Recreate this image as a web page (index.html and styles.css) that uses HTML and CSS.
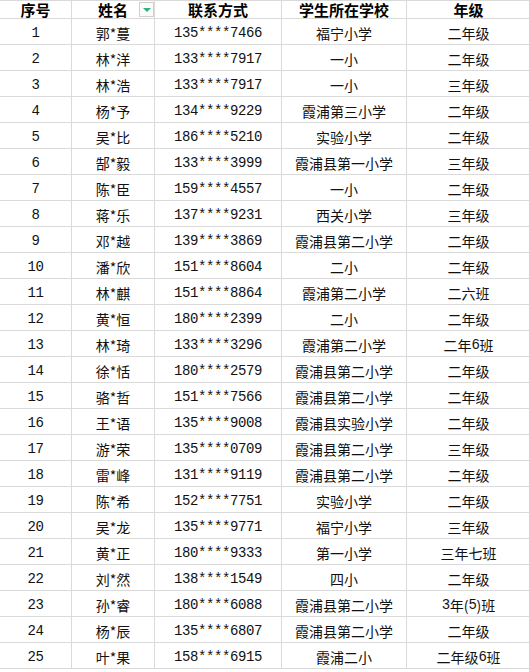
FILE: index.html
```html
<!DOCTYPE html>
<html lang="zh">
<head>
<meta charset="utf-8">
<link rel="stylesheet" href="styles.css">
</head>
<body>
<div class="sheet">
  <div class="cell head">序号</div>
  <div class="cell head name-head">姓名<span class="filter"><span class="tri"></span></span></div>
  <div class="cell head">联系方式</div>
  <div class="cell head">学生所在学校</div>
  <div class="cell head last">年级</div>

  <div class="cell num">1</div><div class="cell">郭*蔓</div><div class="cell num">135****7466</div><div class="cell">福宁小学</div><div class="cell last">二年级</div>
  <div class="cell num">2</div><div class="cell">林*洋</div><div class="cell num">133****7917</div><div class="cell">一小</div><div class="cell last">二年级</div>
  <div class="cell num">3</div><div class="cell">林*浩</div><div class="cell num">133****7917</div><div class="cell">一小</div><div class="cell last">三年级</div>
  <div class="cell num">4</div><div class="cell">杨*予</div><div class="cell num">134****9229</div><div class="cell">霞浦第三小学</div><div class="cell last">二年级</div>
  <div class="cell num">5</div><div class="cell">吴*比</div><div class="cell num">186****5210</div><div class="cell">实验小学</div><div class="cell last">二年级</div>
  <div class="cell num">6</div><div class="cell">郜*毅</div><div class="cell num">133****3999</div><div class="cell">霞浦县第一小学</div><div class="cell last">三年级</div>
  <div class="cell num">7</div><div class="cell">陈*臣</div><div class="cell num">159****4557</div><div class="cell">一小</div><div class="cell last">二年级</div>
  <div class="cell num">8</div><div class="cell">蒋*乐</div><div class="cell num">137****9231</div><div class="cell">西关小学</div><div class="cell last">三年级</div>
  <div class="cell num">9</div><div class="cell">邓*越</div><div class="cell num">139****3869</div><div class="cell">霞浦县第二小学</div><div class="cell last">二年级</div>
  <div class="cell num">10</div><div class="cell">潘*欣</div><div class="cell num">151****8604</div><div class="cell">二小</div><div class="cell last">二年级</div>
  <div class="cell num">11</div><div class="cell">林*麒</div><div class="cell num">151****8864</div><div class="cell">霞浦第二小学</div><div class="cell last">二六班</div>
  <div class="cell num">12</div><div class="cell">黄*恒</div><div class="cell num">180****2399</div><div class="cell">二小</div><div class="cell last">二年级</div>
  <div class="cell num">13</div><div class="cell">林*琦</div><div class="cell num">133****3296</div><div class="cell">霞浦第二小学</div><div class="cell last">二年<span class="d">6</span>班</div>
  <div class="cell num">14</div><div class="cell">徐*恬</div><div class="cell num">180****2579</div><div class="cell">霞浦县第二小学</div><div class="cell last">二年级</div>
  <div class="cell num">15</div><div class="cell">骆*哲</div><div class="cell num">151****7566</div><div class="cell">霞浦县第二小学</div><div class="cell last">二年级</div>
  <div class="cell num">16</div><div class="cell">王*语</div><div class="cell num">135****9008</div><div class="cell">霞浦县实验小学</div><div class="cell last">二年级</div>
  <div class="cell num">17</div><div class="cell">游*荣</div><div class="cell num">135****0709</div><div class="cell">霞浦县第二小学</div><div class="cell last">三年级</div>
  <div class="cell num">18</div><div class="cell">雷*峰</div><div class="cell num">131****9119</div><div class="cell">霞浦县第二小学</div><div class="cell last">二年级</div>
  <div class="cell num">19</div><div class="cell">陈*希</div><div class="cell num">152****7751</div><div class="cell">实验小学</div><div class="cell last">二年级</div>
  <div class="cell num">20</div><div class="cell">吴*龙</div><div class="cell num">135****9771</div><div class="cell">福宁小学</div><div class="cell last">三年级</div>
  <div class="cell num">21</div><div class="cell">黄*正</div><div class="cell num">180****9333</div><div class="cell">第一小学</div><div class="cell last">三年七班</div>
  <div class="cell num">22</div><div class="cell">刘*然</div><div class="cell num">138****1549</div><div class="cell">四小</div><div class="cell last">二年级</div>
  <div class="cell num">23</div><div class="cell">孙*睿</div><div class="cell num">180****6088</div><div class="cell">霞浦县第二小学</div><div class="cell last"><span class="d">3</span>年(<span class="d">5</span>)班</div>
  <div class="cell num">24</div><div class="cell">杨*辰</div><div class="cell num">135****6807</div><div class="cell">霞浦县第二小学</div><div class="cell last">二年级</div>
  <div class="cell num">25</div><div class="cell">叶*果</div><div class="cell num">158****6915</div><div class="cell">霞浦二小</div><div class="cell last">二年级<span class="d">6</span>班</div>
</div>
</body>
</html>
```

FILE: styles.css
```css
html, body {
  margin: 0;
  padding: 0;
  background: #ffffff;
}
body {
  width: 529px;
  height: 672px;
  overflow: hidden;
}
.sheet {
  display: grid;
  grid-template-columns: 72px 83px 127px 125px 123px;
  grid-template-rows: 18px repeat(25, 26px);
  border-top: 1px solid #dadada;
  font-family: "Noto Sans CJK SC", sans-serif;
  font-size: 14px;
  color: #111;
}
.cell {
  box-sizing: border-box;
  border-right: 1px solid #dadada;
  border-bottom: 1px solid #dadada;
  display: flex;
  align-items: center;
  justify-content: center;
  white-space: nowrap;
  line-height: 16px;
  padding-top: 2px;
}
.cell.last {
  border-right: none;
}
.head {
  font-weight: bold;
  font-size: 15px;
  line-height: 17px;
  color: #000;
  padding-top: 0;
  position: relative;
}
.num, .d {
  font-family: "Liberation Mono", "Noto Sans CJK SC", monospace;
  letter-spacing: -0.4px;
}
.filter {
  position: absolute;
  right: 0;
  top: 1px;
  width: 15px;
  height: 15px;
  box-sizing: border-box;
  border: 1px solid #cfcfcf;
  background: #fbfbfb;
  display: flex;
  align-items: center;
  justify-content: center;
}
.tri {
  width: 0;
  height: 0;
  border-left: 4px solid transparent;
  border-right: 4px solid transparent;
  border-top: 4px solid #2fb27a;
}
```
